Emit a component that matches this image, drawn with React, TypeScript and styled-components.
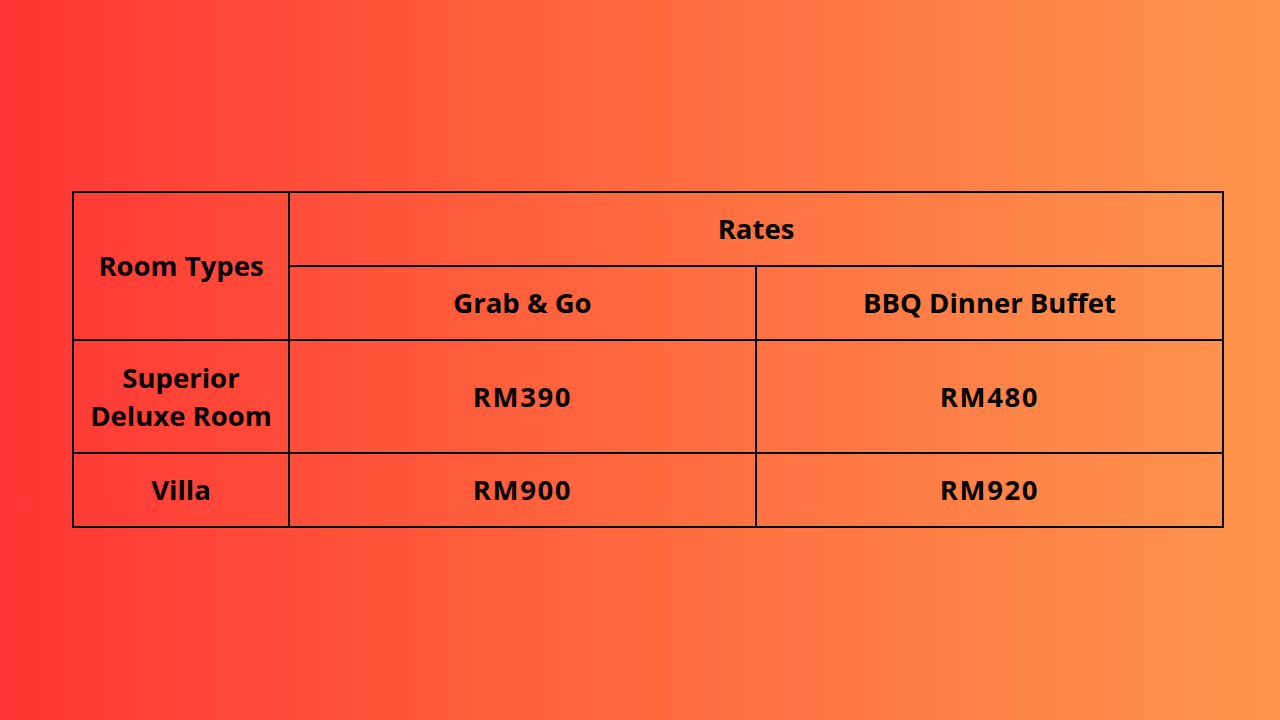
import React from "react";
import styled, { createGlobalStyle } from "styled-components";

const Global = createGlobalStyle`
  html, body { margin: 0; padding: 0; }
  body { width: 1280px; height: 720px; overflow: hidden; }
`;

const Page = styled.div`
  width: 1280px;
  height: 720px;
  box-sizing: border-box;
  background: linear-gradient(90deg, #ff3535 0%, #ff6a3f 50%, #ff964f 100%);
  display: flex;
  align-items: center;
  padding-left: 72px;
  font-family: "Open Sans", "Liberation Sans", sans-serif;
  font-weight: 700;
  color: #000;
`;

const Table = styled.table`
  border-collapse: collapse;
  width: 1152px;
  table-layout: fixed;
  margin-top: -1px;
`;

const Row = styled.tr<{ $h: number }>`
  height: ${(p) => p.$h}px;
`;

const Cell = styled.td<{ $num?: boolean }>`
  border: 2px solid #000;
  text-align: center;
  vertical-align: middle;
  font-size: 27.5px;
  line-height: 38px;
  padding: 0;
  letter-spacing: ${(p) => (p.$num ? "1.6px" : "0")};
`;

const rows = [
  { name: ["Superior", "Deluxe Room"], a: "RM390", b: "RM480", h: 113 },
  { name: ["Villa"], a: "RM900", b: "RM920", h: 74 },
];

export default function App() {
  return (
    <>
      <Global />
      <Page>
        <Table>
          <colgroup>
            <col style={{ width: 216 }} />
            <col style={{ width: 467 }} />
            <col style={{ width: 467 }} />
          </colgroup>
          <tbody>
            <Row $h={74}>
              <Cell rowSpan={2}>Room Types</Cell>
              <Cell colSpan={2}>Rates</Cell>
            </Row>
            <Row $h={74}>
              <Cell>Grab &amp; Go</Cell>
              <Cell>BBQ Dinner Buffet</Cell>
            </Row>
            {rows.map((r) => (
              <Row $h={r.h} key={r.a}>
                <Cell>
                  {r.name.map((n, i) => (
                    <React.Fragment key={n}>
                      {i > 0 && <br />}
                      {n}
                    </React.Fragment>
                  ))}
                </Cell>
                <Cell $num>{r.a}</Cell>
                <Cell $num>{r.b}</Cell>
              </Row>
            ))}
          </tbody>
        </Table>
      </Page>
    </>
  );
}
